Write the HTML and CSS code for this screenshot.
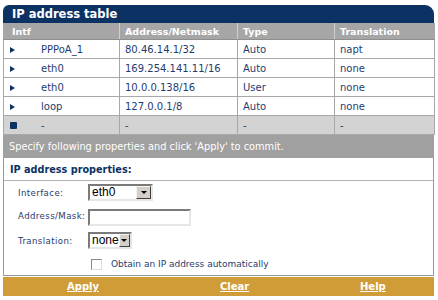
FILE: index.html
```html
<!DOCTYPE html>
<html>
<head>
<meta charset="utf-8">
<link rel="stylesheet" href="styles.css">
</head>
<body>
<div class="panel">
  <div class="title">IP address table</div>
  <table class="iptable">
    <colgroup>
      <col class="c1"><col class="c2"><col class="c3"><col class="c4">
    </colgroup>
    <thead>
      <tr><th class="first">Intf</th><th>Address/Netmask</th><th>Type</th><th>Translation</th></tr>
    </thead>
    <tbody>
      <tr><td class="first"><span class="arrow"></span><span class="intf">PPPoA_1</span></td><td>80.46.14.1/32</td><td>Auto</td><td>napt</td></tr>
      <tr><td class="first"><span class="arrow"></span><span class="intf">eth0</span></td><td>169.254.141.11/16</td><td>Auto</td><td>none</td></tr>
      <tr><td class="first"><span class="arrow"></span><span class="intf">eth0</span></td><td>10.0.0.138/16</td><td>User</td><td>none</td></tr>
      <tr><td class="first"><span class="arrow"></span><span class="intf">loop</span></td><td>127.0.0.1/8</td><td>Auto</td><td>none</td></tr>
      <tr class="newrow"><td class="first"><span class="square"></span><span class="intf">-</span></td><td>-</td><td>-</td><td>-</td></tr>
    </tbody>
  </table>
  <div class="hint">Specify following properties and click 'Apply' to commit.</div>
  <div class="props">
    <div class="props-head">IP address properties:</div>
    <div class="form">
      <label class="lbl">Interface:</label>
      <div class="sel w-eth"><span class="sel-val">eth0</span><span class="sel-btn"><span class="tri"></span></span></div>
      <label class="lbl">Address/Mask:</label>
      <div><input class="txt" type="text"></div>
      <label class="lbl">Translation:</label>
      <div class="sel w-none"><span class="sel-val">none</span><span class="sel-btn"><span class="tri"></span></span></div>
    </div>
    <div class="auto"><span class="cb"></span><span>Obtain an IP address automatically</span></div>
  </div>
  <div class="footer">
    <a href="#">Apply</a>
    <a href="#">Clear</a>
    <a href="#">Help</a>
  </div>
</div>
</body>
</html>
```
FILE: styles.css
```css
html, body { margin: 0; padding: 0; background: #fff; }
body { font-family: "DejaVu Sans", Verdana, sans-serif; }
.panel { width: 431px; margin: 5px 0 0 3px; }
.title {
  height: 18px; line-height: 19px;
  background: #0c3264; color: #fff;
  font-weight: bold; font-size: 11.5px;
  padding-left: 9px;
  border-radius: 6px 9px 0 0;
}
.iptable { width: 431px; border-collapse: collapse; table-layout: fixed; }
.c1 { width: 116px; } .c2 { width: 118px; } .c3 { width: 97px; } .c4 { width: 100px; }
.iptable th {
  background: #a6a6a6; color: #fff; font-size: 9.5px; font-weight: bold;
  text-align: left; height: 16px; padding: 0 0 0 5px;
  border-left: 1px solid #cfcfcf; border-bottom: 1px solid #8e8e8e;
}
.iptable th.first { padding-left: 8px; border-left: 1px solid #a6a6a6; }
.iptable td {
  height: 18px; padding: 0 0 0 5px; font-size: 10px; color: #1f3c6f;
  border: 1px solid #a8a8a8; white-space: nowrap;
}
.iptable td.first { padding-left: 6px; }
.newrow td { background: #d3d3d3; }
.arrow {
  display: inline-block; width: 0; height: 0;
  border-top: 3px solid transparent; border-bottom: 3px solid transparent;
  border-left: 5px solid #0c3264; vertical-align: middle;
}
.square {
  display: inline-block; width: 7px; height: 7px; background: #0c3264;
  border-radius: 1px; vertical-align: middle;
}
.intf { margin-left: 26px; }
.newrow .intf { margin-left: 24px; }
.hint {
  background: #a0a0a0; color: #fff; font-size: 9.8px;
  height: 23px; line-height: 23px; padding-left: 6px;
}
.props { border: 1px solid #9a9a9a; border-top: 0; }
.props-head {
  height: 22px; line-height: 24px; border-bottom: 1px solid #b3b3b3;
  color: #0c3264; font-weight: bold; font-size: 9.7px; padding-left: 6px;
}
.form {
  display: grid; grid-template-columns: 70px 1fr; grid-template-rows: 23px 24px 25px;
  align-items: center; padding: 0 0 0 14px;
}
.lbl { font-size: 8.6px; color: #1f3c6f; letter-spacing: 0.4px; }
.sel {
  display: inline-flex; height: 17px; box-sizing: border-box;
  border: 2px solid; border-color: #7a7a7a #e6e6e6 #e6e6e6 #7a7a7a;
  background: #fff; align-items: stretch; font-family: "Liberation Sans", Arial, sans-serif;
  font-size: 12px; color: #000;
}
.w-eth { width: 65px; }
.w-none { width: 44px; }
.sel-val { flex: 1; padding-left: 2px; line-height: 13px; }
.sel-btn {
  width: 13px; background: #d4d0c8; display: flex; align-items: center; justify-content: center;
  border: 1px solid; border-color: #f4f4f4 #404040 #404040 #f4f4f4;
}
.tri {
  width: 0; height: 0; border-left: 3px solid transparent; border-right: 3px solid transparent;
  border-top: 3px solid #000;
}
.txt {
  width: 103px; height: 17px; box-sizing: border-box; margin: 0;
  border: 2px solid; border-color: #7a7a7a #e6e6e6 #e6e6e6 #7a7a7a; padding: 0;
}
.auto {
  height: 22px; display: flex; align-items: center; padding-left: 87px;
  font-size: 9px; color: #1f3c6f;
}
.cb {
  width: 9px; height: 9px; border: 1px solid; border-color: #888 #ddd #ddd #888;
  background: #fff; margin-right: 9px;
}
.footer {
  margin-top: 1px;
  height: 19px; background: #d09c37; display: grid;
  grid-template-columns: 153px 140px 1fr; align-items: center; padding-left: 64px;
}
.footer a { color: #fff; font-weight: bold; font-size: 10px; text-decoration: underline; }
```
